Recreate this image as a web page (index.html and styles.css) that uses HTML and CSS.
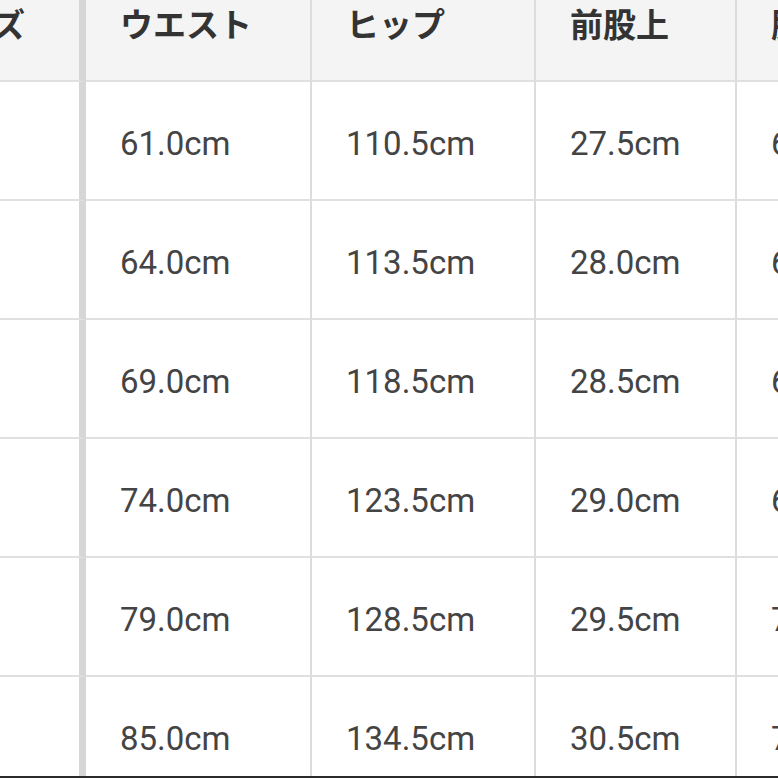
FILE: index.html
```html
<!DOCTYPE html>
<html lang="ja">
<head>
<meta charset="utf-8">
<title>サイズ表</title>
<link rel="stylesheet" href="styles.css">
</head>
<body>
<div class="frame">
  <table class="size-table">
    <colgroup>
      <col class="c-size">
      <col class="c-waist">
      <col class="c-hip">
      <col class="c-rise">
      <col class="c-inseam">
    </colgroup>
    <thead>
      <tr>
        <th class="first">サイズ</th>
        <th>ウエスト</th>
        <th>ヒップ</th>
        <th>前股上</th>
        <th>股下</th>
      </tr>
    </thead>
    <tbody>
      <tr><td class="first">S</td><td>61.0cm</td><td>110.5cm</td><td>27.5cm</td><td>66.0cm</td></tr>
      <tr><td class="first">M</td><td>64.0cm</td><td>113.5cm</td><td>28.0cm</td><td>67.0cm</td></tr>
      <tr><td class="first">L</td><td>69.0cm</td><td>118.5cm</td><td>28.5cm</td><td>68.0cm</td></tr>
      <tr><td class="first">XL</td><td>74.0cm</td><td>123.5cm</td><td>29.0cm</td><td>69.0cm</td></tr>
      <tr><td class="first">2XL</td><td>79.0cm</td><td>128.5cm</td><td>29.5cm</td><td>70.0cm</td></tr>
      <tr><td class="first">3XL</td><td>85.0cm</td><td>134.5cm</td><td>30.5cm</td><td>71.0cm</td></tr>
    </tbody>
  </table>
</div>
</body>
</html>
```
FILE: styles.css
```css
html, body {
  margin: 0;
  padding: 0;
  background: #ffffff;
}

.frame {
  width: 778px;
  height: 776px;
  overflow: hidden;
  border-bottom: 2px solid #2b2b2b;
  background: #ffffff;
}

.size-table {
  margin-left: -107px;
  table-layout: fixed;
  border-collapse: separate;
  border-spacing: 0;
  width: 1068px;
  font-family: Roboto, "Noto Sans CJK JP", sans-serif;
}

.c-size { width: 193px; }
.c-waist { width: 226px; }
.c-hip { width: 224px; }
.c-rise { width: 201px; }
.c-inseam { width: 224px; }

.size-table th,
.size-table td {
  box-sizing: border-box;
  text-align: left;
  vertical-align: top;
  padding: 0 0 0 34px;
  border-right: 2px solid #dcdcdc;
  border-bottom: 2px solid #e0e0e0;
  white-space: nowrap;
  overflow: hidden;
}

.size-table th.first,
.size-table td.first {
  border-right: 7px solid #d6d6d6;
}

.size-table th {
  height: 82px;
  padding-top: 3px;
  background: #f4f4f4;
  font-family: "Noto Sans CJK JP", sans-serif;
  font-weight: 700;
  font-size: 33px;
  line-height: 40px;
  color: #333333;
}

.size-table td {
  height: 119px;
  padding-top: 42px;
  font-size: 33px;
  line-height: 40px;
  font-weight: 400;
  color: #444444;
}
```
